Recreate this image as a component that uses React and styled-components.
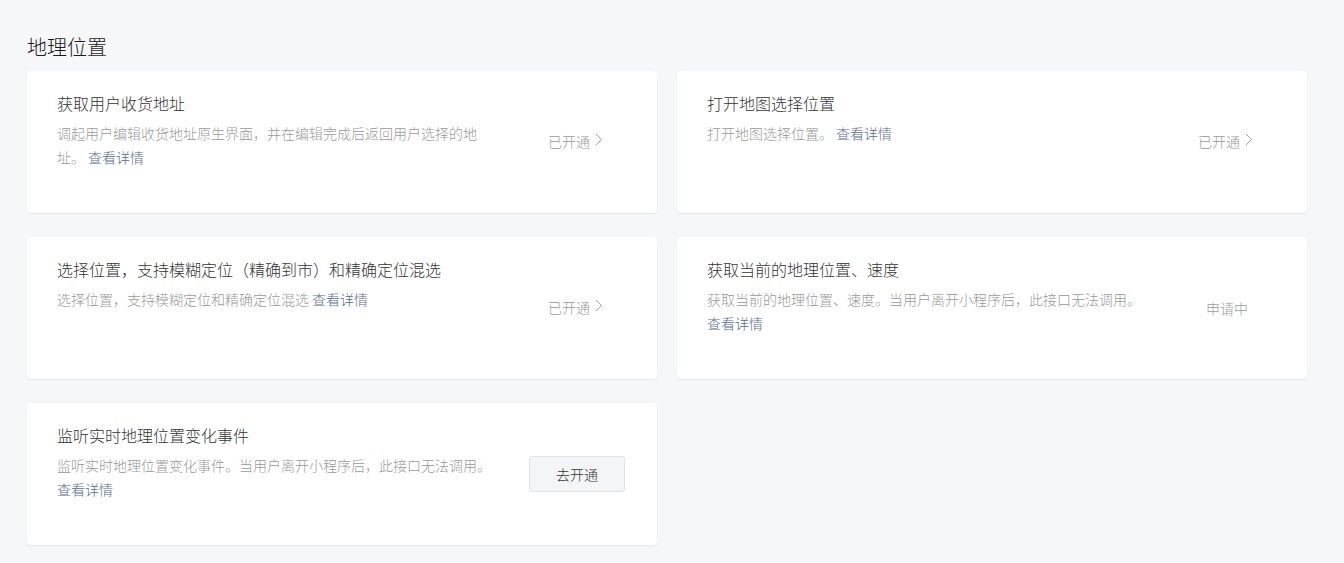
import React from 'react'
import styled, { createGlobalStyle } from 'styled-components'

const GlobalStyle = createGlobalStyle`
  html, body {
    margin: 0;
    padding: 0;
    background: #f6f7f9;
    font-family: "Noto Sans CJK SC", "Noto Sans", sans-serif;
  }
`

const items = [
  {
    title: '获取用户收货地址',
    desc: '调起用户编辑收货地址原生界面，并在编辑完成后返回用户选择的地址。',
    status: 'open',
  },
  {
    title: '打开地图选择位置',
    desc: '打开地图选择位置。',
    status: 'open',
  },
  {
    title: '选择位置，支持模糊定位（精确到市）和精确定位混选',
    desc: '选择位置，支持模糊定位和精确定位混选',
    status: 'open',
  },
  {
    title: '获取当前的地理位置、速度',
    desc: '获取当前的地理位置、速度。当用户离开小程序后，此接口无法调用。',
    status: 'pending',
  },
  {
    title: '监听实时地理位置变化事件',
    desc: '监听实时地理位置变化事件。当用户离开小程序后，此接口无法调用。',
    status: 'apply',
  },
]

const Chevron = () => (
  <svg width="8" height="13" viewBox="0 0 8 13" fill="none">
    <path d="M1 1l5.5 5.5L1 12" stroke="#a6a6a6" strokeWidth="1" />
  </svg>
)

const Action = ({ status }) => {
  if (status === 'open') {
    return (
      <StatusLink>
        已开通
        <Chevron />
      </StatusLink>
    )
  }
  if (status === 'pending') {
    return <StatusText>申请中</StatusText>
  }
  return <Button>去开通</Button>
}

export default () => {
  return (
    <>
      <GlobalStyle />
      <Page>
        <Heading>地理位置</Heading>
        <Grid>
          {items.map((item) => (
            <Card key={item.title}>
              <Content>
                <Title>{item.title}</Title>
                <Desc>
                  {item.desc}{' '}
                  <More href="#">查看详情</More>
                </Desc>
              </Content>
              <ActionCol>
                <Action status={item.status} />
              </ActionCol>
            </Card>
          ))}
        </Grid>
      </Page>
    </>
  )
}

const Page = styled.div`
  padding: 33px 37px 18px 27px;
`

const Heading = styled.h2`
  margin: 0 0 10px;
  font-size: 20px;
  line-height: 28px;
  font-weight: 300;
  color: #1a1a1a;
`

const Grid = styled.div`
  display: grid;
  grid-template-columns: 1fr 1fr;
  column-gap: 20px;
  row-gap: 24px;
`

const Card = styled.div`
  display: flex;
  align-items: stretch;
  min-height: 142px;
  box-sizing: border-box;
  padding: 20px 32px 20px 30px;
  background: #fff;
  border-radius: 4px;
  box-shadow: 0 1px 2px rgba(0, 0, 0, 0.07);
`

const Content = styled.div`
  flex: 1;
  min-width: 0;
`

const Title = styled.div`
  font-size: 16px;
  line-height: 24px;
  font-weight: 300;
  color: #353535;
  margin-bottom: 6px;
`

const Desc = styled.div`
  max-width: 440px;
  font-size: 14px;
  line-height: 24px;
  font-weight: 300;
  color: #9a9a9a;
`

const More = styled.a`
  color: #576b95;
  text-decoration: none;
`

const ActionCol = styled.div`
  width: 96px;
  flex-shrink: 0;
  display: flex;
  align-items: center;
  justify-content: center;
`

const StatusLink = styled.span`
  display: inline-flex;
  align-items: center;
  gap: 5px;
  margin-left: -3px;
  font-size: 14px;
  font-weight: 300;
  color: #9a9a9a;
  padding-bottom: 2px;
  svg {
    margin-top: -4px;
  }
`

const StatusText = styled.span`
  font-size: 14px;
  font-weight: 300;
  color: #9a9a9a;
`

const Button = styled.button`
  width: 96px;
  height: 36px;
  box-sizing: border-box;
  border: 1px solid #e1e2e5;
  border-radius: 3px;
  background: #f4f5f7;
  color: #353535;
  font-family: inherit;
  font-size: 14px;
  font-weight: 300;
  cursor: pointer;
`
